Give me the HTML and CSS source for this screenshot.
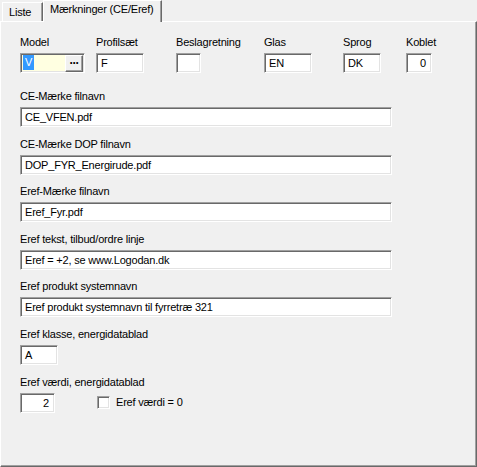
FILE: index.html
```html
<!DOCTYPE html>
<html>
<head>
<meta charset="utf-8">
<link rel="stylesheet" href="styles.css">
</head>
<body>
<div class="tabs">
  <div class="tab tab-liste">Liste</div>
  <div class="tab tab-active">Mærkninger (CE/Eref)</div>
</div>
<div class="panel">
  <div class="top-row">
    <div class="field"><div class="lbl">Model</div><div class="input w-model model"><span class="sel">V</span><span class="dots">···</span></div></div>
    <div class="field"><div class="lbl">Profilsæt</div><div class="input w-48">F</div></div>
    <div class="field"><div class="lbl">Beslagretning</div><div class="input w-25"></div></div>
    <div class="field"><div class="lbl">Glas</div><div class="input w-48">EN</div></div>
    <div class="field"><div class="lbl">Sprog</div><div class="input w-38">DK</div></div>
    <div class="field"><div class="lbl">Koblet</div><div class="input w-26 right">0</div></div>
  </div>
  <div class="groups">
    <div class="field"><div class="lbl">CE-Mærke filnavn</div><div class="input w-long">CE_VFEN.pdf</div></div>
    <div class="field"><div class="lbl">CE-Mærke DOP filnavn</div><div class="input w-long">DOP_FYR_Energirude.pdf</div></div>
    <div class="field"><div class="lbl">Eref-Mærke filnavn</div><div class="input w-long">Eref_Fyr.pdf</div></div>
    <div class="field"><div class="lbl">Eref tekst, tilbud/ordre linje</div><div class="input w-long">Eref = +2, se www.Logodan.dk</div></div>
    <div class="field"><div class="lbl">Eref produkt systemnavn</div><div class="input w-long">Eref produkt systemnavn til fyrretræ 321</div></div>
    <div class="field"><div class="lbl">Eref klasse, energidatablad</div><div class="input w-38">A</div></div>
    <div class="field"><div class="lbl">Eref værdi, energidatablad</div>
      <div class="inline">
        <div class="input w-35 right">2</div>
        <div class="check"><span class="box"></span><span>Eref værdi = 0</span></div>
      </div>
    </div>
  </div>
</div>
</body>
</html>
```

FILE: styles.css
```css
html, body {
  margin: 0;
  padding: 0;
  background: #f0f0f0;
}
body {
  width: 477px;
  height: 467px;
  font-family: "Liberation Sans", Arial, sans-serif;
  font-size: 11px;
  line-height: 13px;
  letter-spacing: -0.2px;
  color: #000;
  overflow: hidden;
}
.tabs {
  display: flex;
  align-items: flex-end;
  height: 21px;
  padding-left: 2px;
}
.tab {
  box-sizing: border-box;
  background: #f0f0f0;
  border-top: 1px solid #fff;
  border-left: 1px solid #fff;
  border-right: 1px solid #696969;
  box-shadow: inset -1px 0 0 #a0a0a0;
}
.tab-liste {
  width: 41px;
  height: 19px;
  padding: 3px 0 0 6px;
}
.tab-active {
  position: relative;
  z-index: 1;
  width: 119px;
  height: 22px;
  margin-bottom: -1px;
  padding: 2px 0 0 6px;
}
.panel {
  box-sizing: border-box;
  width: 477px;
  height: 446px;
  border-top: 1px solid #fff;
  border-left: 1px solid #fff;
  border-right: 1px solid #696969;
  border-bottom: 1px solid #696969;
  box-shadow: inset -1px -1px 0 #a0a0a0;
  padding: 14px 0 0 19px;
}
.top-row {
  display: grid;
  grid-template-columns: 76px 80px 88px 79px 63px auto;
}
.field {
  display: flex;
  flex-direction: column;
  align-items: flex-start;
}
.lbl {
  height: 13px;
  margin-bottom: 4px;
  white-space: nowrap;
}
.input {
  box-sizing: border-box;
  height: 20px;
  background: #fff;
  border-top: 1px solid #a0a0a0;
  border-left: 1px solid #a0a0a0;
  border-right: 1px solid #fff;
  border-bottom: 1px solid #fff;
  box-shadow: inset 1px 1px 0 #696969, inset -1px -1px 0 #e3e3e3;
  padding: 3px 3px 0 4px;
  white-space: nowrap;
  overflow: hidden;
}
.right { text-align: right; padding-right: 5px; }
.w-model { width: 65px; }
.w-48 { width: 48px; }
.w-25 { width: 25px; }
.w-38 { width: 38px; }
.w-26 { width: 26px; }
.w-35 { width: 35px; }
.w-long { width: 372px; }
.model {
  background: #ffffe1;
  display: flex;
  align-items: flex-start;
  justify-content: space-between;
  padding: 1px 1px 0 2px;
}
.sel {
  background: #3399ff;
  color: #fff;
  height: 15px;
  line-height: 15px;
  padding: 0 2px;
}
.dots {
  box-sizing: border-box;
  width: 18px;
  height: 17px;
  background: #f0f0f0;
  border-top: 1px solid #fff;
  border-left: 1px solid #fff;
  border-right: 1px solid #696969;
  border-bottom: 1px solid #696969;
  box-shadow: inset -1px -1px 0 #a0a0a0;
  font-weight: bold;
  font-size: 12px;
  line-height: 14px;
  text-align: center;
  letter-spacing: -1px;
}
.groups {
  display: flex;
  flex-direction: column;
  gap: 10.6px;
  margin-top: 17px;
}
.inline {
  display: flex;
  align-items: center;
  gap: 42px;
}
.check {
  display: flex;
  align-items: center;
  gap: 6px;
}
.box {
  box-sizing: border-box;
  width: 13px;
  height: 13px;
  background: #fff;
  border-top: 1px solid #a0a0a0;
  border-left: 1px solid #a0a0a0;
  border-right: 1px solid #fff;
  border-bottom: 1px solid #fff;
  box-shadow: inset 1px 1px 0 #696969, inset -1px -1px 0 #e3e3e3;
}
```
